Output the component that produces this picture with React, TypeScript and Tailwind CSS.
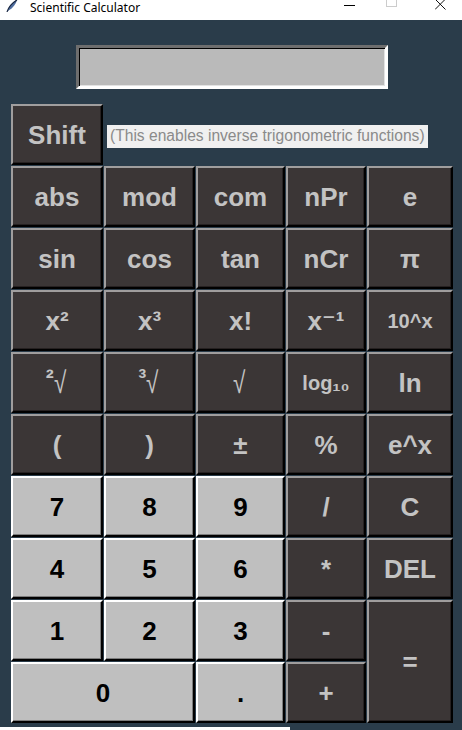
import clsx from "clsx";

type Key = {
  label: string;
  light?: boolean;
  small?: boolean;
  colSpan?: boolean;
  rowSpan?: boolean;
  root?: string;
};

const keys: Key[] = [
  { label: "abs" }, { label: "mod" }, { label: "com" }, { label: "nPr" }, { label: "e" },
  { label: "sin" }, { label: "cos" }, { label: "tan" }, { label: "nCr" }, { label: "π" },
  { label: "x²" }, { label: "x³" }, { label: "x!" }, { label: "x⁻¹" }, { label: "10^x", small: true },
  { label: "2root", root: "²" }, { label: "3root", root: "³" }, { label: "root", root: "" }, { label: "log₁₀", small: true }, { label: "ln" },
  { label: "(" }, { label: ")" }, { label: "±" }, { label: "%" }, { label: "e^x" },
  { label: "7", light: true }, { label: "8", light: true }, { label: "9", light: true }, { label: "/" }, { label: "C" },
  { label: "4", light: true }, { label: "5", light: true }, { label: "6", light: true }, { label: "*" }, { label: "DEL" },
  { label: "1", light: true }, { label: "2", light: true }, { label: "3", light: true }, { label: "-" }, { label: "=", rowSpan: true },
  { label: "0", light: true, colSpan: true }, { label: ".", light: true }, { label: "+" },
];

function CalcButton({ k }: { k: Key }) {
  return (
    <button
      className={clsx(
        "flex items-center justify-center border-2 border-r-black border-b-black font-bold leading-none font-['Liberation_Sans',Arial,'DejaVu_Sans',sans-serif]",
        k.light
          ? "bg-[#bfbfbf] text-black border-t-white border-l-white shadow-[inset_-1px_-1px_0_#7c7c7c]"
          : "bg-[#3b3636] text-[#c3c3c3] border-t-[#a09e9e] border-l-[#a09e9e] shadow-[inset_-1px_-1px_0_#262121]",
        k.small ? "text-[20px]" : "text-[26px]",
        k.colSpan && "col-span-2",
        k.rowSpan && "row-span-2"
      )}
    >
      {k.root !== undefined ? (
        <span className="flex items-start">
          <span className="text-[24px] -mt-[2px]">{k.root}</span>
          <span className="font-normal text-[30px] scale-x-75 -ml-[2px]">√</span>
        </span>
      ) : (
        k.label
      )}
    </button>
  );
}

export default function App() {
  return (
    <div className="w-[462px] h-[730px] bg-[#2a3c4a] flex flex-col overflow-hidden">
      {/* title bar, top part is cut off in the screenshot */}
      <div className="h-[20px] bg-white flex items-start shrink-0 overflow-hidden">
        <svg width="12" height="12" viewBox="0 0 12 12" className="ml-[6px] shrink-0">
          <path d="M1.5 11.5 C2.5 6.5 6 2 11 0 C10 4 7 8 2.6 10.6 Z" fill="#4f6d9f" />
          <path d="M1 12 C2.5 7 6 3 11 0" stroke="#1a2740" strokeWidth="1.2" fill="none" />
        </svg>
        <span className="ml-[12px] mt-[1px] text-[12px] leading-[14px] text-black font-['Noto_Sans',sans-serif]">
          Scientific Calculator
        </span>
        <div className="ml-auto flex items-start">
          <div className="mt-[5px] w-[11px] h-px bg-black" />
          <div className="ml-[31px] -mt-[3px] w-[11px] h-[10px] border border-[#cccccc]" />
          <svg width="11" height="10" viewBox="0 0 11 10" className="ml-[38px] mr-[16px]">
            <path d="M0 -1 L10.5 9.5 M10.5 -1 L0 9.5" stroke="#111" strokeWidth="1" />
          </svg>
        </div>
      </div>

      <div className="mt-[25px] ml-[76px] w-[312px] h-[44px] bg-[#bababa] border-[3px] border-t-[#6e6e6e] border-l-[#6e6e6e] border-r-white border-b-white shadow-[inset_1px_1px_0_#000,inset_-1px_-1px_0_#e3e3e3]" />

      <div className="mt-[15px] ml-[11px] h-[61px] flex items-center">
        <button className="w-[92px] h-[61px] flex items-center justify-center border-2 border-t-[#a09e9e] border-l-[#a09e9e] border-r-black border-b-black bg-[#3b3636] text-[#c3c3c3] text-[26px] font-bold leading-none shadow-[inset_-1px_-1px_0_#262121] font-['Liberation_Sans',Arial,sans-serif]">
          Shift
        </button>
        <span className="ml-[4px] mt-[3px] h-[23px] px-[3px] flex items-center bg-[#f0f0f0] text-[#8a8a8a] text-[15.6px] leading-none font-['Liberation_Sans',Arial,sans-serif]">
          (This enables inverse trigonometric functions)
        </span>
      </div>

      <div className="mt-px ml-[11px] grid grid-cols-[92px_91px_89px_80px_86px] auto-rows-[61px] gap-px">
        {keys.map((k) => (
          <CalcButton key={k.label} k={k} />
        ))}
      </div>

      <div className="mt-[4px] w-[290px] h-[3px] bg-white" />
    </div>
  );
}
